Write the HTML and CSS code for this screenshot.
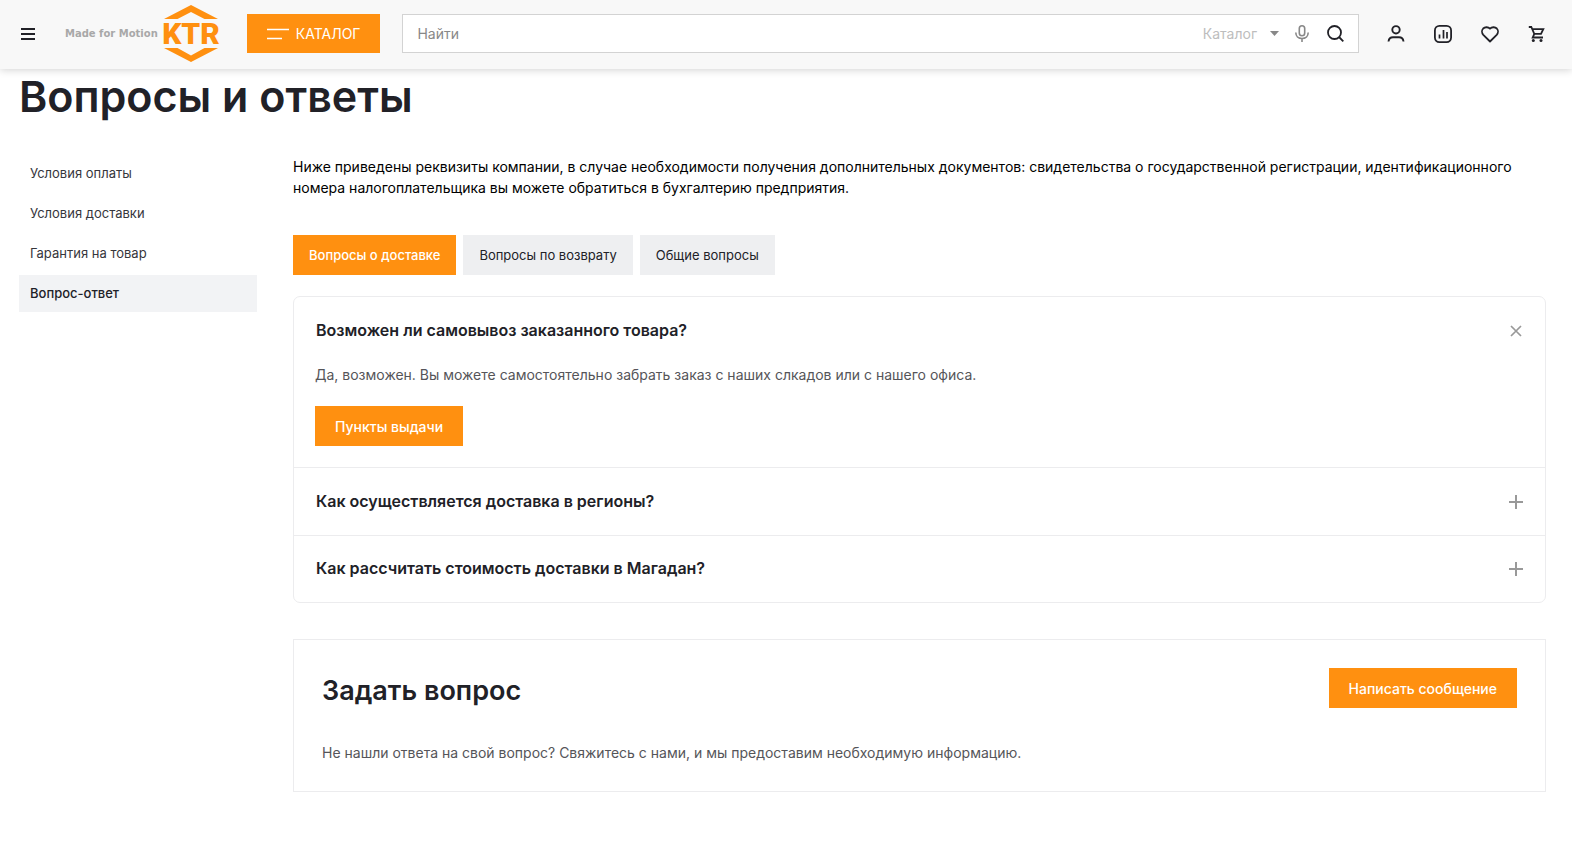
FILE: index.html
```
<!DOCTYPE html>
<html lang="ru">
<head>
<meta charset="utf-8">
<meta name="viewport" content="width=device-width, initial-scale=1">
<title>Вопросы и ответы</title>
<link rel="stylesheet" href="styles.css">
</head>
<body>
<header class="header">
  <button class="icon-button burger" type="button" aria-label="Меню">
    <svg width="14" height="12" viewBox="0 0 14 12" fill="none" stroke="currentColor" stroke-width="2"><path d="M0 1h14M0 6h14M0 11h14"/></svg>
  </button>
  <a class="logo" href="#" aria-label="KTR Made for Motion">
    <span class="logo-slogan">Made for Motion</span>
    <svg class="logo-mark" width="54" height="58" viewBox="0 0 54 58">
      <path d="M0 14 27 0l27 14H40.500L27 7 13.500 14z"/>
      <path d="M0 43h13.500L27 50.500 40.500 43H54L27 57z"/>
      <text class="logo-name" x="27" y="39" text-anchor="middle">KTR</text>
    </svg>
  </a>
  <button class="button catalog" type="button">
    <svg width="22" height="12" viewBox="0 0 22 12" fill="none" stroke="currentColor" stroke-width="1.500"><path d="M0 1.500h22M0 10.500h15"/></svg>
    КАТАЛОГ
  </button>
  <form class="search" role="search">
    <input class="search-input" type="search" placeholder="Найти" aria-label="Найти">
    <button class="search-scope" type="button">Каталог
      <svg width="9" height="5" viewBox="0 0 9 5" fill="#888"><path d="M0 0h9L4.500 5z"/></svg>
    </button>
    <button class="icon-button mic" type="button" aria-label="Голосовой поиск">
      <svg width="14" height="17" viewBox="0 0 14 17" fill="none" stroke="currentColor" stroke-width="1.600"><rect x="4.300" y=".8" width="5.400" height="10" rx="2.700"/><path d="M.8 7.500c0 3.500 2.500 6 6.200 6s6.200-2.500 6.200-6M7 13.500V17"/></svg>
    </button>
    <button class="icon-button" type="submit" aria-label="Искать">
      <svg width="17" height="17" viewBox="0 0 17 17" fill="none" stroke="currentColor" stroke-width="1.800"><circle cx="7.500" cy="7.500" r="6.500"/><path d="m12 12 4.300 4.300"/></svg>
    </button>
  </form>
  <nav class="actions" aria-label="Пользователь">
    <a class="action" href="#" aria-label="Кабинет">
      <svg width="18" height="18" viewBox="0 0 18 18" fill="none" stroke="currentColor" stroke-width="1.900"><circle cx="9" cy="4.800" r="3.700"/><path d="M1.500 16.500c.3-2.400 1.900-4.200 4.500-4.200h6c2.600 0 4.200 1.800 4.500 4.200"/></svg>
    </a>
    <a class="action" href="#" aria-label="Сравнение">
      <svg width="18" height="18" viewBox="0 0 18 18" fill="none" stroke="currentColor" stroke-width="1.800"><rect x=".9" y=".9" width="16.200" height="16.200" rx="4.500"/><path d="M5.500 9.500v4M9.500 5v8.500M13 7v6.500" stroke-width="1.700"/></svg>
    </a>
    <a class="action" href="#" aria-label="Избранное">
      <svg width="18" height="18" viewBox="0 0 18 18" fill="none" stroke="currentColor" stroke-width="1.800" stroke-linejoin="round"><path d="M9 16.500 2.300 9.800C.6 8 .6 5.200 2.200 3.500 4 1.700 7.200 1.900 9 3.700c1.800-1.800 5-2 6.800-.2 1.600 1.700 1.600 4.500-.1 6.300z"/></svg>
    </a>
    <a class="action" href="#" aria-label="Корзина">
      <svg width="18" height="18" viewBox="0 0 18 18" fill="none" stroke="currentColor" stroke-width="1.800"><path d="M.8 2h2.500l3 6.900-1.600 3.600H15M3.800 4.200h11.500l-2.300 4.700H6.300"/><circle cx="5.300" cy="15.600" r="1.500" fill="currentColor" stroke="none"/><circle cx="13" cy="15.600" r="1.500" fill="currentColor" stroke="none"/></svg>
    </a>
  </nav>
</header>
<div class="page">
  <h1 class="page-title">Вопросы и ответы</h1>
  <div class="columns">
    <nav class="sidebar" aria-label="Разделы">
      <a class="side-link" href="#">Условия оплаты</a>
      <a class="side-link" href="#">Условия доставки</a>
      <a class="side-link" href="#">Гарантия на товар</a>
      <a class="side-link side-link-active" href="#" aria-current="page">Вопрос-ответ</a>
    </nav>
    <main class="content">
      <p class="intro">Ниже приведены реквизиты компании, в случае необходимости получения дополнительных документов: свидетельства о государственной регистрации, идентификационного номера налогоплательщика вы можете обратиться в бухгалтерию предприятия.</p>
      <div class="tabs" role="tablist">
        <button class="tab tab-active" type="button" role="tab" aria-selected="true">Вопросы о доставке</button>
        <button class="tab" type="button" role="tab" aria-selected="false">Вопросы по возврату</button>
        <button class="tab" type="button" role="tab" aria-selected="false">Общие вопросы</button>
      </div>
      <div class="accordion">
        <section class="item">
          <button class="question" type="button" aria-expanded="true">Возможен ли самовывоз заказанного товара?
            <svg width="14" height="14" viewBox="0 0 14 14" stroke="#999" stroke-width="1.700"><path d="m2 2 10 10M12 2 2 12"/></svg>
          </button>
          <div class="answer">
            <p class="text">Да, возможен. Вы можете самостоятельно забрать заказ с наших слкадов или с нашего офиса.</p>
            <button class="button" type="button">Пункты выдачи</button>
          </div>
        </section>
        <section class="item">
          <button class="question" type="button" aria-expanded="false">Как осуществляется доставка в регионы?
            <svg width="14" height="14" viewBox="0 0 14 14" stroke="#999" stroke-width="2"><path d="M0 7h14M7 0v14"/></svg>
          </button>
        </section>
        <section class="item">
          <button class="question" type="button" aria-expanded="false">Как рассчитать стоимость доставки в Магадан?
            <svg width="14" height="14" viewBox="0 0 14 14" stroke="#999" stroke-width="2"><path d="M0 7h14M7 0v14"/></svg>
          </button>
        </section>
      </div>
      <section class="ask">
        <div class="ask-head">
          <h2 class="ask-title">Задать вопрос</h2>
          <button class="button" type="button">Написать сообщение</button>
        </div>
        <p class="text">Не нашли ответа на свой вопрос? Свяжитесь с нами, и мы предоставим необходимую информацию.</p>
      </section>
    </main>
  </div>
</div>
</body>
</html>
```

FILE: styles.css
```
* { box-sizing: border-box; }
body { margin: 0; background: #fff; color: #212127; font-family: Inter, "Liberation Sans", sans-serif; font-size: 14px; line-height: 21px; }
button, input { font: inherit; color: inherit; border: 0; border-radius: 0; padding: 0; background: none; }
button { cursor: pointer; }
a { color: inherit; text-decoration: none; }
h1, h2, p { margin: 0; }
svg { display: block; flex: none; }

.header { display: flex; align-items: center; height: 69px; padding: 0 26px 2px 21px; background: #f8f8f8; box-shadow: 0 1px 8px rgba(0, 0, 0, .18); }
.icon-button { display: flex; flex: none; }
.burger { margin-right: 30px; }
.logo { display: flex; align-items: center; gap: 6px; margin-right: 29px; }
.logo-slogan { color: #a8a8a8; font: bold 10px/12px "DejaVu Sans", sans-serif; white-space: nowrap; }
.logo-mark { fill: #ff9010; overflow: visible; }
.logo-name { font: 900 30px Roboto, sans-serif; }
.button { display: inline-flex; align-items: center; justify-content: center; flex: none; height: 40px; padding: 0 20px; background: #ff9010; color: #fff; font-weight: 500; }
.catalog { gap: 7px; height: 39px; margin-right: 22px; font-weight: 400; }
.search { display: flex; align-items: center; flex: 1; min-width: 0; height: 39px; padding: 0 14px; border: 1px solid #d3d3d3; background: #fff; }
.search-input { flex: 1; min-width: 0; outline: 0; }
.search-input::placeholder { color: #888; opacity: 1; }
.search-scope { display: flex; align-items: center; gap: 13px; margin-right: 16px; color: #bdbdbd; }
.mic { margin-right: 18px; color: #888; }
.actions { display: flex; gap: 29px; margin-left: 28px; }
.action { display: block; }

.page { padding: 0 26px 0 19px; }
.page-title { font-size: 43px; font-weight: 600; line-height: 54px; }
.columns { display: grid; grid-template-columns: 238px minmax(0, 1fr); column-gap: 36px; padding-top: 32px; }
.sidebar { display: flex; flex-direction: column; gap: 3px; }
.side-link { padding: 8px 11px; font-size: 13px; color: #36363c; }
.side-link-active { background: #f2f3f5; color: #212127; font-weight: 500; }
.content { padding-top: 1px; }
.intro { color: #000; }
.tabs { display: flex; gap: 7px; margin: 37px 0 21px; }
.tab { height: 40px; padding: 0 16px; background: #eeeff1; font-size: 13px; }
.tab-active { background: #ff9010; color: #fff; font-weight: 500; }
.accordion { border: 1px solid #ececee; border-radius: 7px; }
.item + .item { border-top: 1px solid #ececee; }
.question { display: flex; align-items: center; justify-content: space-between; width: 100%; padding: 23px 22px; font-size: 16px; font-weight: 600; text-align: left; }
.item:last-child .question { padding-top: 22px; }
.answer { padding: 0 21px 21px; }
.answer .button { margin-top: 21px; }
.text { color: #555559; }
.ask { margin-top: 36px; padding: 28px; border: 1px solid #ececee; }
.ask-head { display: flex; align-items: flex-start; justify-content: space-between; margin-bottom: 33px; }
.ask-title { padding-top: 5px; font-size: 27px; font-weight: 600; line-height: 36px; }
```
